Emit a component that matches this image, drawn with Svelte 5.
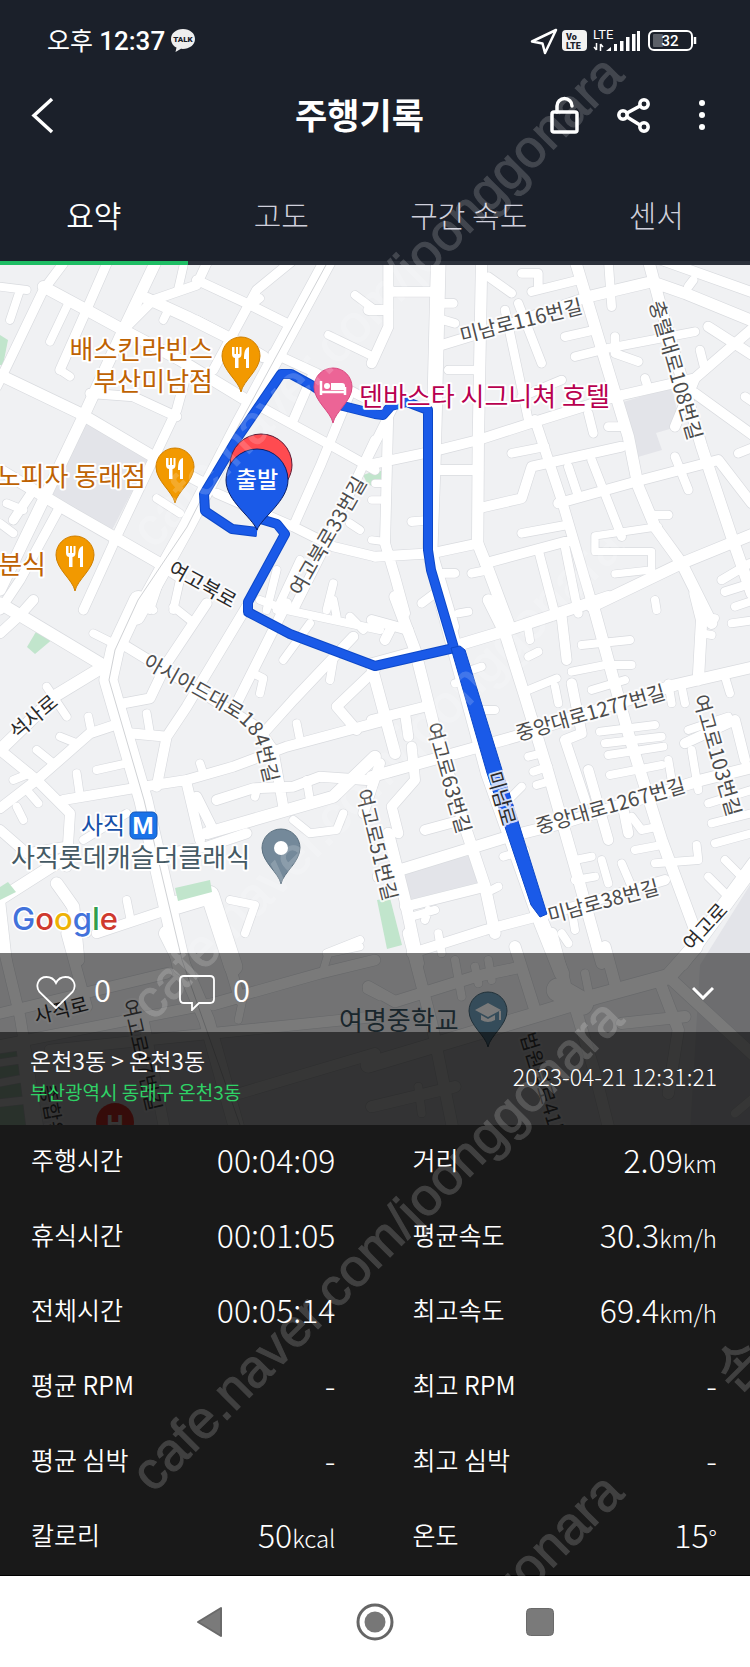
<script>
  const tabs = ['요약', '고도', '구간 속도', '센서'];
  let active = $state(0);

  const stats = [
    ['주행시간', '00:04:09', ''],
    ['거리', '2.09', 'km'],
    ['휴식시간', '00:01:05', ''],
    ['평균속도', '30.3', 'km/h'],
    ['전체시간', '00:05:14', ''],
    ['최고속도', '69.4', 'km/h'],
    ['평균 RPM', '-', ''],
    ['최고 RPM', '-', ''],
    ['평균 심박', '-', ''],
    ['최고 심박', '-', ''],
    ['칼로리', '50', 'kcal'],
    ['온도', '15', '°']
  ];

  // Each map tile is drawn at three units per map pixel, by road width.
  const tiles = [
    {
      at: 'translate(0 260) scale(.3333)',
      roads: [
        [48, 'M985 0L720 490L560 800L410 1070'],
        [34, 'M470 0L370 210L250 470L140 700L0 990M130 80L260 150L370 210L540 300L730 415M0 345L240 460L460 590L610 670M0 630L200 750L340 830L470 905L540 950M440 115L560 170L720 250L790 290'],
        [28, 'M325 0L255 160L180 330M190 10L130 90L10 340L-10 380M620 10L590 75L460 120L370 210M590 60L740 130L870 195M880 0L770 90L700 220L640 330M270 400L400 410L530 470M560 340L530 450L440 640L340 850M350 830L250 1050M180 740L60 960L0 1050M100 690L40 780'],
        [28, 'M820 280L950 340L1125 430M780 440L1000 560L1125 630M940 340L880 480M1050 400L960 620L880 800M650 700L880 800L1000 860L1125 890M1125 540L960 890L880 1050M1180 440L1100 600'],
        [24, 'M0 80L80 90M60 90L30 180M205 130L150 245M550 20L535 85M500 160L490 180M1065 105L1125 150M985 225L1120 290M470 715L540 760M0 790L40 820M20 730L70 750M1000 970L980 1050M830 930L800 1050M1050 790L1080 810M180 330L210 350M900 900L830 1050M540 960L520 1050M760 130L780 115M480 960L450 1050'],
        [10, 'M592 172L672 214']
      ]
    },
    {
      at: 'translate(375 260) scale(.3333)',
      roads: [
        [44, 'M190 0L180 400L175 600L165 880L230 1100'],
        [34, 'M320 0L310 540L308 850L340 930L400 1090M600 0L690 300L760 530L790 680L840 800L920 910L1010 1090M820 0L860 150L980 560L1070 830L1130 1000M640 110L830 65L930 100L1150 190M650 1040L920 910L1140 820'],
        [30, 'M40 0L40 200L-10 310M40 450L30 850L60 950L90 1060M-20 150L40 150M50 95L180 95M200 255L380 200L640 110M-20 615L170 575L310 540L480 485L720 410L960 355L1150 190M180 630L310 630M310 745L440 715L470 620L740 560M480 480L560 720L660 1060M550 730L800 660L1030 600L1130 730M0 890L170 880L310 850M330 910L590 840M860 0L1140 100M960 400L1140 530M1000 200L1140 290M900 500L960 355'],
        [26, 'M340 50L410 100M390 150L460 480M430 130L500 310M220 330L310 330M440 410L560 360M440 40L490 40L490 80M470 95L610 60M700 0L710 140M570 230L660 210M600 290L700 265L960 215M720 230L720 280L790 305M975 270L990 330M810 355L820 385M700 500L750 500M640 460L655 520M410 580L510 560M580 620L610 710M650 600L740 830M440 820L575 795M830 765L880 765M900 590L940 690M490 870L540 1060M570 860L610 1060M200 940L240 940M290 940L340 930M140 1030L180 1000M1040 960L1125 910M1050 995L1130 970M1110 410L1140 430M110 785L170 780M200 130L235 130M205 180L240 190M1140 560L1090 580M940 80L955 60'],
        [22, 'M850 800L660 828L660 875L830 875L830 930L720 942M0 670L30 670M-10 720L30 720M-10 840L30 845']
      ]
    },
    {
      at: 'translate(0 600) scale(.3333)',
      roads: [
        [54, 'M415 0L345 150L325 240L430 600L545 1100M530 915L630 885L700 1100'],
        [36, 'M0 10L300 190M310 200L170 285L0 450M620 700L1000 590L1125 470M170 850L220 920L235 1080M-20 910L200 770'],
        [30, 'M0 100L60 45L100 0M380 140L560 250L770 380L820 450L850 620M360 370L270 400L110 540L0 625M0 450L110 540L210 640L200 800M190 600L430 560L560 540L700 500L860 440L1140 365M370 310L450 295L500 190L620 10M390 400L500 410L470 560M500 410L560 320L740 20M860 10L700 330M1060 110L880 300L790 400M560 550L600 720M590 590L640 690M650 600L760 565L880 560L960 530L1100 540M0 900L20 1080M290 1000L500 930M1125 210L1010 320L1070 390M1140 490L1090 640M0 690L80 760L200 740M740 700L620 740L500 760'],
        [24, 'M280 100L360 140M140 260L200 350M265 350L275 400M180 410L230 430M110 450L160 490M40 540L90 520M80 570L115 610M50 620L70 660M290 510L380 490M230 520L240 590M440 340L450 400M930 70L850 180M760 220L790 235L780 280M880 660L930 700L1010 690L1030 640M600 490L610 520M890 370L900 420M690 900L765 915L735 1000M980 1060L1080 1020M380 900L390 950M765 590L770 570M920 540L930 600M1000 180L990 240M780 0L860 30L1140 90M1000 0L1010 50M1050 50L1090 90M430 0L460 30M520 20L570 60M170 850L260 1000M250 720L380 640']
      ]
    },
    {
      at: 'translate(375 600) scale(.3333)',
      roads: [
        [44, 'M200 0L340 520L500 970L560 1120M1140 790L920 1090'],
        [34, 'M250 135L400 90L700 -10M340 0L390 100L450 290L520 520L600 800L680 1090M650 0L760 400L860 720L960 990M60 -10L120 150L180 390L260 650L330 860L360 1000M-10 530L420 410L600 350L900 255L1140 200M960 -20L980 60L970 240M10 830L400 710L560 670L980 540L1140 500M-10 200L60 460M40 700L90 900L130 1090'],
        [30, 'M-10 360L150 320M90 920L330 860M110 1060L330 990L600 920L870 840M-10 190L100 160M-10 60L100 90M30 120L50 80M90 340L100 410M110 440L120 540L50 620L70 700M150 690L260 660M560 50L575 180M590 250L620 400L570 420L630 600M640 510L700 720M740 600L760 700M930 430L1080 360L1110 480'],
        [24, 'M620 135L765 120M590 215L690 195L770 195M650 270L750 240M460 90L465 120M460 170L490 155M460 270L545 235M540 260L550 310M675 395L840 375M690 430L860 410M700 465L865 440M705 525L860 495M460 470L500 460M475 515L520 500M485 555L520 545M385 770L450 750M600 780L650 770M600 840L660 830M250 40L280 35M290 210L320 200M240 250L260 245M320 330L360 330M400 600L440 560M780 750L860 735M840 790L970 780L965 735M770 650L800 690L850 680M940 390L1060 350M950 450L970 570M880 480L890 540M1000 610L1130 570M1010 670L1130 640M1020 730L1130 700M1000 830L1060 890M1050 780L1110 840M880 250L890 310M920 260L930 310M1050 230L1065 280M680 780L700 850M740 790L770 860M560 1000L580 1030M110 950L180 930M190 1000L200 1060M980 50L1020 55M980 100L1010 105M1070 70L1140 60M1080 20L1140 0M840 0L845 30M350 870L370 860M150 960L160 930M590 930L600 990']
      ]
    },
    {
      at: 'translate(0 940) scale(.3333)',
      roads: [
        [46, 'M500 -20L560 100L620 240L720 600'],
        [32, 'M0 -20L60 230L120 600M-20 225L500 100M-20 320L640 190L960 100L1125 60M200 -20L260 200M660 -20L720 180M430 240L500 600M150 330L1125 230M720 460L1125 340'],
        [22, 'M-10 330L60 320L90 560M-10 370L60 360M-10 430L70 415M-10 490L80 480M730 170L715 240M640 200L710 180M970 90L985 40L1080 20M1100 150L1140 170']
      ]
    },
    {
      at: 'translate(375 940) scale(.3333)',
      roads: [
        [46, 'M-20 375L480 225L660 170L880 110L960 20'],
        [70, 'M550 150L620 190'],
        [34, 'M-20 140L60 185L300 110L420 85M100 -20L170 250L240 600M420 20L480 210M530 -20L570 130M690 20L725 150M880 110L1140 350M860 140L910 270L880 460M-10 500L240 440M600 200L660 400L710 600M740 250L930 230'],
        [24, 'M240 60L260 170M300 80L310 130M630 100L640 150M130 440L140 520M1080 520L1140 470M340 60L350 120']
      ]
    }
  ];

  const route = 'M257 532L232 529L205 511L204 494L238 437L281 374L291 374L313 386L343 406L375 414L383 415L391 406L407 402L428 410L428 550L431 570L454 648L375 666L290 634L248 612L248 602L285 534L277 524L257 518';

  const streets = [
    ['미남로116번길', 462, 343, -14],
    ['충렬대로108번길', 649, 303, 74],
    ['여고북로33번길', 301, 597, -60],
    ['여고로51번길', 356, 791, 76],
    ['여고로63번길', 426, 725, 74],
    ['중앙대로1277번길', 518, 741, -16],
    ['중앙대로1267번길', 538, 834, -16],
    ['여고로103번길', 693, 697, 74],
    ['미남로38번길', 550, 923, -15],
    ['여고북로', 167, 573, 29, 'dark'],
    ['석사로', 17, 740, -40, 'dark'],
    ['여고로', 692, 952, -48, 'dark'],
    ['미남로', 487, 774, 74, 'dark'],
    ['사직로', 36, 1024, -14, 'dark'],
    ['여고로47번길', 122, 1001, 77],
    ['법원북로41번길', 520, 1035, 73],
    ['종합운동장', 40, 1086, 80]
  ];

  const foodPins = [[241, 356], [175, 467], [75, 555]];
  const pin = 'M0 36C-2 25-19 14-19 0A19 19 0 1 1 19 0C19 14 2 25 0 36Z';
  const bigPin = 'M0 50C-5 37-31 21-31 0A31 31 0 1 1 31 0C31 21 5 37 0 50Z';
  const marks = [[153, 550], [153, 1022], [153, 1494], [153, 1968]];
</script>

<div class="app">
  <header>
    <div class="status">
      <span class="clock">오후 <b>12:37</b></span>
      <svg class="talk" width="24" height="24" viewBox="0 0 24 24" aria-hidden="true">
        <path d="M12 0C5 0 0 4.400 0 10c0 4 2.400 7 5.500 8.600L4.500 23l5.500-3.200C17.500 20.500 24 16.500 24 10 24 4.400 19 0 12 0Z" fill="#eee" />
        <text x="12" y="13" font-size="8" font-weight="900" text-anchor="middle" fill="#1b202a">TALK</text>
      </svg>
      <svg class="signals" width="170" height="32" viewBox="530 25 170 32" aria-hidden="true">
        <path d="M556 30L532 41.500L542.500 43.500L545 53Z" fill="none" stroke="#fff" stroke-width="2.500" stroke-linejoin="round" />
        <rect x="562" y="30" width="25" height="21" rx="4" fill="#f2f2f2" />
        <g font-weight="900" fill="#1b202a">
          <text x="566" y="40" font-size="9">Vo</text>
          <text x="566" y="49" font-size="9">LTE</text>
        </g>
        <text x="593" y="39" font-size="13" fill="#fff">LTE</text>
        <path d="M596.500 43v7M594 47l2.500 3M600.500 51v-7M603 47l-2.500-3" stroke="#fff" stroke-width="1.500" fill="none" />
        <path d="M606 51l5-4v4zM614 51v-7h3v7zM620 51V41h3.500v10zM626 51V37h3.500v14zM632 51V34h3.500v17zM637 51V31h3v20z" fill="#fff" />
        <rect x="649" y="31" width="43" height="19" rx="5" fill="none" stroke="#fff" stroke-width="2" />
        <rect x="653" y="34" width="10" height="13" rx="1" fill="#5b5f67" />
        <path d="M695 37v7" stroke="#fff" stroke-width="2.500" />
        <text x="670" y="46" font-size="15" font-weight="500" text-anchor="middle" fill="#fff">32</text>
      </svg>
    </div>

    <div class="titlebar">
      <button class="back" aria-label="뒤로">
        <svg width="24" height="38" viewBox="0 0 24 38"><path d="M21 2L3 18.500L21 35" fill="none" stroke="#fff" stroke-width="3.500" /></svg>
      </button>
      <h1>주행기록</h1>
      <div class="actions">
        <button aria-label="잠금">
          <svg width="32" height="40" viewBox="0 0 32 40"><rect x="4" y="16" width="25" height="20" rx="2" fill="none" stroke="#fff" stroke-width="3.500" /><path d="M9 16V10a7.500 7.500 0 0 1 15 0" fill="none" stroke="#fff" stroke-width="3.500" stroke-linecap="round" /></svg>
        </button>
        <button aria-label="공유">
          <svg width="36" height="40" viewBox="0 0 36 40" fill="none" stroke="#fff" stroke-width="3.500"><circle cx="7" cy="19" r="4.200" /><circle cx="28" cy="8" r="4.200" /><circle cx="28" cy="31" r="4.200" /><path d="M11 17L24 10M11 21L24 29" /></svg>
        </button>
        <button aria-label="더보기">
          <svg width="12" height="40" viewBox="0 0 12 40" fill="#fff"><circle cx="6" cy="7" r="3" /><circle cx="6" cy="19" r="3" /><circle cx="6" cy="31" r="3" /></svg>
        </button>
      </div>
    </div>

    <nav class="tabs">
      {#each tabs as tab, i}
        <button class:active={active === i} onclick={() => (active = i)}>{tab}</button>
      {/each}
    </nav>
  </header>

  <section class="map">
    <svg class="canvas" viewBox="0 265 750 860" role="img" aria-label="주행 경로 지도">
      <rect y="260" width="750" height="870" fill="#f0f1f3" />
      <g fill="#e3e4e9">
        <path d="M84 420L151 455L112 530L50 500Z" />
        <path d="M620 403L672 387L680 426L656 433L662 450L638 457Z" />
        <path d="M402 870L472 855L482 884L406 905Z" />
        <path d="M750 885V1130H690L700 965Z" />
      </g>
      <g fill="#c1e5cc">
        <path d="M0 335L8 340L3 365H0Z" />
        <path d="M363 475L375 471H383V487L368 485Z" />
        <path d="M37 630L54 638L35 654L27 647Z" />
        <path d="M0 1040L20 1043L33 1125H0Z" />
      </g>
      {#each tiles as tile}
        <g transform={tile.at} class="casing">
          {#each tile.roads as [w, d]}<path {d} stroke-width={w + 4} />{/each}
        </g>
      {/each}
      {#each tiles as tile}
        <g transform={tile.at} class="road">
          {#each tile.roads as [w, d]}<path {d} stroke-width={w} />{/each}
        </g>
      {/each}
      <g fill="#c1e5cc">
        <path d="M377 900L390 898L402 945L387 949Z" />
        <path d="M175 888L210 880L212 892L178 901Z" />
        <path d="M0 887L8 882L16 892L0 900Z" />
      </g>
      <path d="M326 265L240 423L187 527L138 600L115 650L109 680L144 800L182 960L240 1125" fill="none" stroke="#d0d2d5" stroke-width="1" />

      <path d={route} fill="none" stroke="#0d48c8" stroke-width="10" stroke-linejoin="round" />
      <path d={route} fill="none" stroke="#1a5ae8" stroke-width="8" stroke-linejoin="round" />
      <path d="M451 648L460 646L465 650L503 773L547 914L540 917L531 905L487 773Z" fill="#1a5ae8" stroke="#0d48c8" />

      <g class="street">
        {#each streets as [name, x, y, angle, tone]}
          <text transform="translate({x} {y}) rotate({angle})" class={tone}>{name}</text>
        {/each}
        <path id="bend" d="M142 666L228 714Q251 727 256 746L270 805" fill="none" />
        <text><textPath href="#bend">아시아드대로184번길</textPath></text>
      </g>

      <g class="place">
        <g fill="#be6202" text-anchor="end">
          <text x="213" y="359">배스킨라빈스</text>
          <text x="213" y="391">부산미남점</text>
          <text x="146" y="486">노피자 동래점</text>
          <text x="46" y="574">분식</text>
        </g>
        <text x="359" y="406" fill="#b8004f">덴바스타 시그니쳐 호텔</text>
        <text class="station" x="81" y="834" fill="#1650a8">사직</text>
        <text x="11" y="867" fill="#455a64">사직롯데캐슬더클래식</text>
        <text x="339" y="1030" fill="#38505c" class="plain">여명중학교</text>
      </g>

      <rect x="130" y="812" width="27" height="27" rx="5" fill="#1a73e8" stroke="#1557b8" />
      <text class="badge" x="143" y="834">M</text>

      {#each foodPins as [x, y]}
        <g transform="translate({x} {y})">
          <path d={pin} fill="#f29900" stroke="#cf7f00" />
          <path d="M-9-9v7c0 3 2 4 3 4v10h3.500v-10c1 0 3-1 3-4v-7h-2v7h-1.500v-7h-2v7h-1.500v-7zM8-9c-4 1-5 5-5 12h2v9h3z" fill="#fff" />
        </g>
      {/each}
      <g transform="translate(333 387)">
        <path d={pin} fill="#ec6496" stroke="#d84a80" />
        <path d="M-12-6v14M-12 5H12M12 8V0" stroke="#fff" stroke-width="2.500" fill="none" />
        <circle cx="-6" cy="-1" r="3" fill="#fff" /><path d="M-2 3v-7H9q3 0 3 3v4z" fill="#fff" />
      </g>
      <g transform="translate(281 848)">
        <path d={pin} fill="#74899a" stroke="#5b7080" /><circle r="7" fill="#fff" />
      </g>
      <g transform="translate(488 1011)">
        <path d={pin} fill="#70a0bc" stroke="#466678" />
        <path d="M-13-1L0-8L13-1L0 6ZM-7 4v5q7 4 14 0V4L0 8ZM11 0h2v9h-2z" fill="#fff" />
      </g>
      <g transform="translate(115 1122)">
        <circle r="19" fill="#ff3a30" /><text class="badge" y="10">H</text>
      </g>

      <path d={bigPin} transform="translate(261 465)" fill="#ff4b50" stroke="#5c1a35" />
      <path d={bigPin} transform="translate(257 480)" fill="#1a5ae8" stroke="#0b1f66" />
      <text x="257" y="488" text-anchor="middle" font-size="23" font-weight="500" fill="#fff">출발</text>

      <text class="google" x="12" y="930"><tspan fill="#4272db">G</tspan><tspan fill="#cf3a2e">o</tspan><tspan fill="#eeb205">o</tspan><tspan fill="#4272db">g</tspan><tspan fill="#2f9e4d">l</tspan><tspan fill="#cf3a2e">e</tspan></text>
    </svg>

    <div class="overlay">
      <div class="social">
        <button aria-label="좋아요">
          <svg width="40" height="36" viewBox="0 0 40 36"><path d="M20 33L3.500 17C-1 11 2 2 10.500 2C15 2 18 4 20 8C22 4 25 2 29.500 2C38 2 41 11 36.500 17Z" fill="none" stroke="#fff" stroke-width="1.800" /></svg>
          <span>0</span>
        </button>
        <button aria-label="댓글">
          <svg width="36" height="36" viewBox="0 0 36 36"><path d="M5 1H31q4 0 4 4V24q0 4-4 4H20L13 35V28H5q-4 0-4-4V5q0-4 4-4Z" fill="none" stroke="#fff" stroke-width="1.800" /></svg>
          <span>0</span>
        </button>
        <button class="fold" aria-label="접기">
          <svg width="22" height="14" viewBox="0 0 22 14"><path d="M1 2L11 12L21 2" fill="none" stroke="#fff" stroke-width="3" /></svg>
        </button>
      </div>
      <div class="info">
        <div>
          <p class="trip">온천3동 &gt; 온천3동</p>
          <p class="area">부산광역시 동래구 온천3동</p>
        </div>
        <time>2023-04-21 12:31:21</time>
      </div>
    </div>
  </section>

  <dl class="stats">
    {#each stats as [label, value, unit]}
      <div>
        <dt>{label}</dt>
        <dd>{value}{#if unit}<small>{unit}</small>{/if}</dd>
      </div>
    {/each}
  </dl>

  <svg class="marks" viewBox="0 0 750 1576" aria-hidden="true">
    {#each marks as [x, y]}
      <text transform="translate({x} {y}) rotate(-45)">cafe.naver.com/joonggonara</text>
    {/each}
    <text transform="translate(754 1378) rotate(-45)" text-anchor="middle">손</text>
  </svg>

  <nav class="system">
    <button aria-label="뒤로"><svg width="40" height="40" viewBox="0 0 40 40"><path d="M8 20L31 6V34Z" fill="#7a7a7a" stroke="#6a6a6a" stroke-width="2" stroke-linejoin="round" /></svg></button>
    <button aria-label="홈"><svg width="40" height="40" viewBox="0 0 40 40"><circle cx="20" cy="20" r="17" fill="none" stroke="#666" stroke-width="3" /><circle cx="20" cy="20" r="10.500" fill="#777" /></svg></button>
    <button aria-label="최근 앱"><svg width="40" height="40" viewBox="0 0 40 40"><rect x="6.500" y="6.500" width="27" height="27" rx="4" fill="#7a7a7a" stroke="#6a6a6a" /></svg></button>
  </nav>
</div>

<style>
  :global(body) {
    background: #fff;
  }
  .app {
    position: relative;
    font-family: 'Noto Sans CJK KR', sans-serif;
    color: #fff;
    overflow: hidden;
  }
  button {
    margin: 0;
    padding: 0;
    border: 0;
    background: none;
    color: inherit;
    font: inherit;
    cursor: pointer;
  }
  svg {
    display: block;
  }
  header {
    background: #1b202a;
  }
  .status {
    display: flex;
    align-items: center;
    height: 76px;
    padding: 6px 50px 0 47px;
    box-sizing: border-box;
    font-family: Roboto, 'Noto Sans CJK KR', sans-serif;
  }
  .clock {
    font-size: 25px;
    line-height: 32px;
  }
  .clock b {
    font-size: 26px;
    font-weight: 500;
  }
  .talk {
    margin-left: 6px;
  }
  .signals {
    margin-left: auto;
  }
  .titlebar {
    display: flex;
    align-items: center;
    justify-content: space-between;
    height: 80px;
    padding: 0 42px 0 31px;
  }
  h1 {
    flex: 1;
    margin: 0;
    padding: 0 0 4px 116px;
    text-align: center;
    font-size: 35px;
    line-height: 48px;
    font-weight: 700;
  }
  .actions {
    display: flex;
    gap: 36px;
  }
  .actions button:last-child {
    margin-left: 8px;
  }
  .tabs {
    display: grid;
    grid-template-columns: repeat(4, 1fr);
    height: 109px;
  }
  .tabs button {
    padding-top: 10px;
    border-bottom: 4px solid #2c313b;
    color: #d0d0dc;
    font-size: 30px;
    font-weight: 300;
  }
  .tabs .active {
    border-color: #1ebd64;
    color: #fff;
    font-weight: 350;
  }
  .map {
    display: grid;
    overflow: hidden;
  }
  .canvas,
  .overlay {
    grid-area: 1 / 1;
  }
  .canvas {
    width: 100%;
  }
  .casing path,
  .road path {
    fill: none;
    stroke: #d9dbdf;
    stroke-linecap: round;
    stroke-linejoin: round;
  }
  .road path {
    stroke: #fff;
  }
  .street text,
  .place text {
    stroke: #fff;
    stroke-width: 4px;
    stroke-linejoin: round;
    paint-order: stroke;
  }
  .street text {
    fill: #4c4c4c;
    font-size: 20px;
    stroke-opacity: 0.8;
  }
  .street .dark {
    fill: #2a2a2a;
  }
  .place text {
    font-size: 26px;
  }
  .place .station {
    font-size: 24px;
  }
  .place .plain {
    stroke: none;
  }
  .badge {
    fill: #fff;
    font-family: Roboto, sans-serif;
    font-size: 24px;
    font-weight: 700;
    text-anchor: middle;
  }
  .google {
    font-family: Inter, sans-serif;
    font-size: 31px;
    font-weight: 500;
    stroke: #fff;
    stroke-width: 3px;
    paint-order: stroke;
  }
  .overlay {
    align-self: end;
  }
  .social {
    display: flex;
    align-items: center;
    height: 79px;
    padding: 0 36px;
    background: rgba(0, 0, 0, 0.52);
    font-size: 31px;
    font-weight: 350;
  }
  .social button {
    display: flex;
    align-items: center;
    gap: 18px;
    margin-right: 68px;
  }
  .social span {
    padding-bottom: 8px;
  }
  .social .fold {
    margin: 0 0 0 auto;
  }
  .info {
    display: flex;
    align-items: center;
    justify-content: space-between;
    height: 93px;
    padding: 0 33px 6px 30px;
    background: rgba(0, 0, 0, 0.79);
    box-sizing: border-box;
  }
  .info p {
    margin: 0;
  }
  .trip {
    font-size: 23px;
    line-height: 32px;
    font-weight: 350;
  }
  .area {
    color: #2fd266;
    font-size: 19px;
    line-height: 32px;
  }
  time {
    font-size: 23px;
    font-weight: 300;
  }
  .stats {
    display: grid;
    grid-template-columns: 1fr 1fr;
    column-gap: 77px;
    margin: 0;
    padding: 0 33px 0 31px;
    background: #191919;
    border-bottom: 1px solid #000;
  }
  .stats div {
    display: flex;
    align-items: center;
    justify-content: space-between;
    height: 75px;
    padding-bottom: 8px;
    box-sizing: border-box;
  }
  dt {
    font-size: 25px;
    font-weight: 350;
  }
  dd {
    margin: 0;
    font-size: 32px;
    font-weight: 300;
  }
  small {
    font-size: 24px;
  }
  .marks {
    position: absolute;
    top: 0;
    left: 0;
    width: 100%;
    pointer-events: none;
    fill: #fff;
    stroke: #fff;
    stroke-width: 1px;
    font-family: 'Liberation Sans', 'Noto Sans CJK KR', sans-serif;
    font-size: 53px;
    overflow: hidden;
  }
  .marks text {
    opacity: 0.17;
  }
  .system {
    display: grid;
    grid-template-columns: repeat(3, 22%);
    justify-content: center;
    height: 91px;
    background: #fff;
  }
  .system button {
    display: grid;
    place-items: center;
  }
</style>
